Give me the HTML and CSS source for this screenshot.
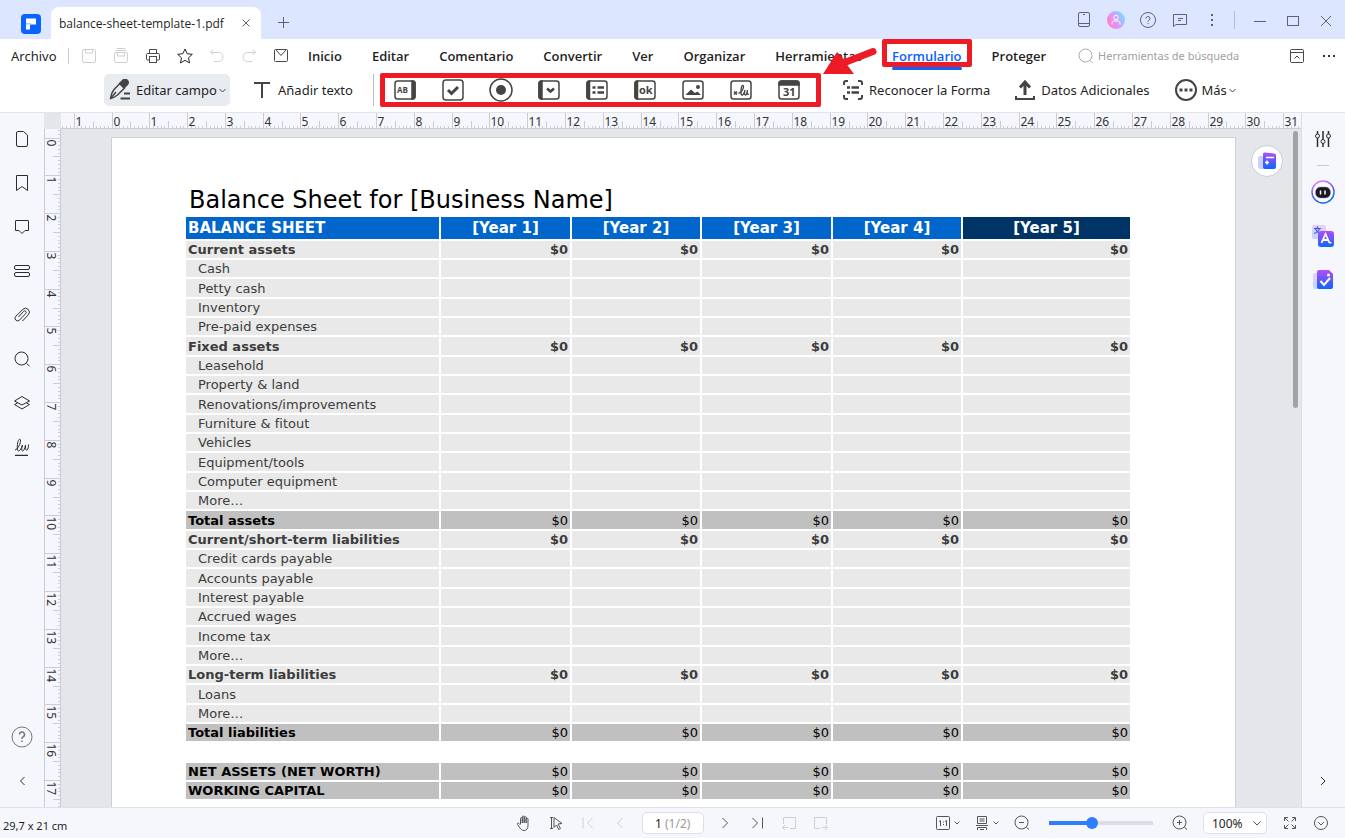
FILE: index.html
```html
<!DOCTYPE html>
<html lang="es">
<head>
  <meta charset="UTF-8">
  <title>balance-sheet-template-1.pdf</title>
  <link rel="stylesheet" href="styles.css">
</head>
<body>
  <svg class="defs" width="0" height="0">
    <defs>
      <linearGradient id="violet" x1="0" y1="0" x2="0" y2="1">
        <stop offset="0" stop-color="#b84cf5"/>
        <stop offset="1" stop-color="#0a66ff"/>
      </linearGradient>
      <linearGradient id="pale" x1="0" y1="0" x2="0" y2="1">
        <stop offset="0" stop-color="#e6d0fa"/>
        <stop offset="1" stop-color="#c2d4ff"/>
      </linearGradient>
      <linearGradient id="ring" x1="0" y1="0" x2="0.4" y2="1">
        <stop offset="0" stop-color="#f78bf5"/>
        <stop offset="0.5" stop-color="#7a5cf5"/>
        <stop offset="1" stop-color="#0a66ff"/>
      </linearGradient>
      <linearGradient id="avatar" x1="0.1" y1="0.8" x2="1" y2="0.3">
        <stop offset="0" stop-color="#ff7fd0"/>
        <stop offset="0.5" stop-color="#d59bff"/>
        <stop offset="1" stop-color="#6fe3ff"/>
      </linearGradient>
    </defs>
  </svg>

  <header class="titlebar">
    <svg class="logo" width="20" height="20" viewBox="0 0 20 20"><rect width="20" height="20" rx="4" fill="#0a62ff"/><path d="M5 4.5h10v6h-6v5H5z" fill="#fff"/><path d="M5 9h5v1.5H5z" fill="#a9c8ff"/></svg>
    <div class="tab">
      <span>balance-sheet-template-1.pdf</span>
      <button class="icon-btn" aria-label="Cerrar pestaña"><svg width="8" height="8" viewBox="0 0 8 8"><path d="M.5.5l7 7M7.5.5l-7 7"/></svg></button>
    </div>
    <button class="icon-btn new-tab" aria-label="Nueva pestaña"><svg width="11" height="11" viewBox="0 0 11 11"><path d="M5.5 0v11M0 5.5h11"/></svg></button>
    <div class="window-tools">
      <button class="icon-btn" aria-label="Móvil"><svg width="16" height="16" viewBox="0 0 16 16"><rect x="2.5" y=".5" width="11" height="14" rx="1.5"/><path d="M7 2.5h2M2.5 11.500h11"/></svg></button>
      <button class="icon-btn" aria-label="Cuenta"><svg width="18" height="18" viewBox="0 0 18 18"><circle cx="9" cy="9" r="9" fill="url(#avatar)" stroke="none"/><circle cx="9" cy="6.5" r="2.2" stroke="#fff"/><path d="M5 13.500v-1.500c0-1.200 1-2 2-2h4c1 0 2 .8 2 2v1.500" stroke="#fff"/></svg></button>
      <button class="icon-btn" aria-label="Ayuda"><svg width="16" height="16" viewBox="0 0 16 16"><circle cx="8" cy="8" r="7.5"/><path d="M6 6.500a2 2 0 1 1 2.800 1.800c-.6.3-.8.6-.8 1.400M8 11v1.200"/></svg></button>
      <button class="icon-btn" aria-label="Comentarios"><svg width="16" height="16" viewBox="0 0 16 16"><path d="M1.500 2.500h13v10H4l-2.500 2z"/><path d="M6 6.500h5M6 8.500h3"/></svg></button>
      <button class="icon-btn" aria-label="Opciones"><svg width="16" height="16" viewBox="0 0 16 16"><path d="M7 2h2v2H7zM7 7h2v2H7zM7 12h2v2H7z" fill="#5d6275" stroke="none"/></svg></button>
    </div>
    <div class="window-buttons">
      <button class="icon-btn" aria-label="Minimizar"><svg width="12" height="12" viewBox="0 0 12 12"><path d="M0 6.500h12"/></svg></button>
      <button class="icon-btn" aria-label="Maximizar"><svg width="12" height="12" viewBox="0 0 12 12"><rect x=".5" y="1.500" width="11" height="9"/></svg></button>
      <button class="icon-btn" aria-label="Cerrar"><svg width="12" height="12" viewBox="0 0 12 12"><path d="M1 1l10 10M11 1L1 11"/></svg></button>
    </div>
  </header>

  <nav class="menubar">
    <button class="file-menu">Archivo</button>
    <div class="quick">
      <button class="icon-btn off" aria-label="Guardar"><svg width="16" height="16" viewBox="0 0 16 16"><rect x="1.500" y="1.500" width="13" height="13" rx="1.500"/><path d="M4.500 1.500v3.500h7V1.500"/></svg></button>
      <button class="icon-btn off" aria-label="Guardar todo"><svg width="16" height="16" viewBox="0 0 16 16"><path d="M3.500.5h9M2.500 2.500h11"/><rect x="1.500" y="4.500" width="13" height="10" rx="1.500"/><path d="M4.500 4.500V8h7V4.500"/></svg></button>
      <button class="icon-btn" aria-label="Imprimir"><svg width="16" height="16" viewBox="0 0 16 16"><path d="M4.500 5V1.500h7V5M4.500 12h-2a1 1 0 0 1-1-1V6.500a1 1 0 0 1 1-1h11a1 1 0 0 1 1 1V11a1 1 0 0 1-1 1h-2"/><rect x="4.500" y="8.500" width="7" height="6"/></svg></button>
      <button class="icon-btn" aria-label="Favorito"><svg width="16" height="16" viewBox="0 0 16 16"><path d="M8 1l2.200 4.700 5.100.6-3.800 3.500 1 5.100L8 12.400l-4.500 2.500 1-5.100L.7 6.300l5.100-.6z" stroke="#222"/></svg></button>
      <button class="icon-btn off" aria-label="Deshacer"><svg width="16" height="16" viewBox="0 0 16 16"><path d="M4.500 1l-3 3 3 3M1.500 4.500h8a4.500 4.500 0 0 1 0 9H5"/></svg></button>
      <button class="icon-btn off" aria-label="Rehacer"><svg width="16" height="16" viewBox="0 0 16 16"><path d="M11.500 1l3 3-3 3M14.500 4.500h-8a4.500 4.500 0 0 0 0 9H11"/></svg></button>
      <button class="icon-btn" aria-label="Correo"><svg width="16" height="16" viewBox="0 0 16 16"><rect x="1.500" y="1.500" width="13" height="12" rx="1"/><path d="M3 2l5 5.500L13 2"/></svg></button>
    </div>
    <div class="menus">
      <button>Inicio</button>
      <button>Editar</button>
      <button>Comentario</button>
      <button>Convertir</button>
      <button>Ver</button>
      <button>Organizar</button>
      <button>Herramientas</button>
      <button class="active">Formulario</button>
      <button>Proteger</button>
    </div>
    <label class="search">
      <svg width="16" height="16" viewBox="0 0 16 16"><circle cx="7.500" cy="7.500" r="6.500"/><path d="M12 12.500l2.500 2.500"/></svg>
      <input type="text" placeholder="Herramientas de búsqueda" aria-label="Herramientas de búsqueda">
    </label>
    <div class="menu-end">
      <button class="icon-btn" aria-label="Contraer"><svg width="16" height="16" viewBox="0 0 16 16"><rect x="1.500" y="1.500" width="13" height="13" rx="1"/><path d="M1.500 4.500h13M5.500 10.500L8 8l2.500 2.500"/></svg></button>
      <button class="icon-btn" aria-label="Más opciones"><svg width="16" height="16" viewBox="0 0 16 16"><path d="M2 7h2v2H2zM7 7h2v2H7zM12 7h2v2h-2z" fill="#333" stroke="none"/></svg></button>
    </div>
  </nav>

  <div class="toolbar">
    <button class="tool selected">
      <svg width="22" height="22" viewBox="0 0 22 22"><path d="M1.500 19.500c.5-4 1.500-6.500 3.500-9L11 4.500l4.500 4.500-7 7c-2 1.500-4 3-7 3.500zM1.500 19.500L7 13" stroke-width="1.500"/><path d="M11 4.500l3-3a2.600 2.600 0 0 1 4 4l-3 3z" fill="#444"/><path d="M15 14.500h6M11.500 19.500H21"/></svg>
      <span>Editar campo</span>
      <svg class="chev" width="7" height="5" viewBox="0 0 7 5"><path d="M.5 1l3 3 3-3"/></svg>
    </button>
    <button class="tool add-text">
      <svg width="16" height="16" viewBox="0 0 16 16"><path d="M0 1h16M8 1v15"/></svg>
      <span>Añadir texto</span>
    </button>
    <div class="fields">
      <button class="icon-btn" aria-label="Campo de texto"><svg width="24" height="24" viewBox="0 0 24 24"><rect x="2" y="3" width="20" height="18" rx="2.500"/><path d="M19 3h.5A2.500 2.500 0 0 1 22 5.500v13a2.500 2.500 0 0 1-2.500 2.500H19z" fill="#444"/><text x="4" y="15" font-size="8">AB</text></svg></button>
      <button class="icon-btn" aria-label="Casilla"><svg width="24" height="24" viewBox="0 0 24 24"><rect x="2" y="2" width="20" height="20" rx="3"/><path d="M7 12l3.500 3.500L17 9" stroke-width="3"/></svg></button>
      <button class="icon-btn" aria-label="Botón de opción"><svg width="24" height="24" viewBox="0 0 24 24"><circle cx="12" cy="12" r="11"/><circle cx="12" cy="12" r="5" fill="#444" stroke="none"/></svg></button>
      <button class="icon-btn" aria-label="Lista desplegable"><svg width="24" height="24" viewBox="0 0 24 24"><rect x="2" y="3" width="20" height="18" rx="2.500"/><path d="M5 3h-.5A2.500 2.500 0 0 0 2 5.500v13A2.500 2.500 0 0 0 4.500 21H5z" fill="#444"/><path d="M10 10.500l3.500 3 3.500-3" stroke-width="2.500"/></svg></button>
      <button class="icon-btn" aria-label="Cuadro de lista"><svg width="24" height="24" viewBox="0 0 24 24"><rect x="2" y="3" width="20" height="18" rx="2.500"/><path d="M4.500 3A2.500 2.500 0 0 0 2 5.500v13A2.500 2.500 0 0 0 4.500 21z" fill="#444"/><path d="M7.500 9.500h3M7.500 14.500h3M12.500 9.500H19M12.500 14.500H19" stroke-width="2.500"/></svg></button>
      <button class="icon-btn" aria-label="Botón"><svg width="24" height="24" viewBox="0 0 24 24"><rect x="2" y="3" width="20" height="18" rx="2.500"/><path d="M4.500 3A2.500 2.500 0 0 0 2 5.500v13A2.500 2.500 0 0 0 4.500 21z" fill="#444"/><text x="6" y="16" font-size="11">ok</text></svg></button>
      <button class="icon-btn" aria-label="Imagen"><svg width="24" height="24" viewBox="0 0 24 24"><rect x="2" y="3" width="20" height="18" rx="2.500"/><path d="M4.500 17l5.500-5.500L14 15l2.500-1.500L20 17z" fill="#444" stroke="none"/><circle cx="17" cy="9" r="2" fill="#444" stroke="none"/></svg></button>
      <button class="icon-btn" aria-label="Firma"><svg width="24" height="24" viewBox="0 0 24 24"><rect x="2" y="3" width="20" height="18" rx="2.500"/><path d="M5 13.500l3 3M8 13.500l-3 3"/><path d="M9.500 15.500c3-1.500 5.500-5 5-7.500-.5-1-1.500-.5-2 1-.8 3-.8 8 .5 8s2.500-3 3-5c-.5 2-1 5 .5 5s1.500-3 2-5c-.5 2-.5 5.500 1.500 4" stroke-width="1.300"/></svg></button>
      <button class="icon-btn" aria-label="Fecha"><svg width="24" height="24" viewBox="0 0 24 24"><rect x="2" y="3" width="20" height="18" rx="2.500"/><path d="M4.500 3h15A2.500 2.500 0 0 1 22 5.500V7H2V5.500A2.500 2.500 0 0 1 4.500 3z" fill="#444"/><text x="6" y="18" font-size="11">31</text></svg></button>
      <svg class="arrow" width="60" height="32" viewBox="0 0 60 32"><path d="M26 16L53 5.500" stroke="#ed1c24" stroke-width="7" stroke-linecap="round"/><path d="M3 28L17 6l6 6 5 8 6 8z" fill="#ed1c24" stroke="none"/></svg>
    </div>
    <button class="tool recognize">
      <svg width="20" height="20" viewBox="0 0 20 20"><path d="M1 5V3a2 2 0 0 1 2-2h2M15 1h2a2 2 0 0 1 2 2v2M19 15v2a2 2 0 0 1-2 2h-2M5 19H3a2 2 0 0 1-2-2v-2"/><path d="M4 7.500h3M8.500 7.500H16M4 12.500h3M8.500 12.500H16" stroke-width="2.500"/></svg>
      <span>Reconocer la Forma</span>
    </button>
    <button class="tool extra">
      <svg width="20" height="20" viewBox="0 0 20 20"><path d="M1 16v3h18v-3"/><path d="M10 15V4M5 7.500L10 2l5 5.500" stroke-width="3"/></svg>
      <span>Datos Adicionales</span>
    </button>
    <button class="tool more">
      <svg width="22" height="22" viewBox="0 0 22 22"><circle cx="11" cy="11" r="10"/><path d="M4.500 9.500h3v3h-3zM9.500 9.500h3v3h-3zM14.500 9.500h3v3h-3z" fill="#444" stroke="none"/></svg>
      <span>Más</span>
      <svg class="chev" width="7" height="5" viewBox="0 0 7 5"><path d="M.5 1l3 3 3-3"/></svg>
    </button>
  </div>

  <main class="workspace">
    <aside class="side left">
      <button class="icon-btn" aria-label="Miniaturas"><svg width="16" height="16" viewBox="0 0 16 16"><path d="M4 .5h5.500l4 3.500v10a1.500 1.500 0 0 1-1.500 1.500H4A1.500 1.500 0 0 1 2.500 14V2A1.500 1.500 0 0 1 4 .5z"/></svg></button>
      <button class="icon-btn" aria-label="Marcadores"><svg width="16" height="16" viewBox="0 0 16 16"><path d="M2.500.5h11v15L8 11.500l-5.500 4z"/></svg></button>
      <button class="icon-btn" aria-label="Comentarios"><svg width="16" height="16" viewBox="0 0 16 16"><path d="M2 1.500h12a.5.5 0 0 1 .5.5v9.500H11l-3 3-3-3H1.500V2a.5.5 0 0 1 .5-.5z"/></svg></button>
      <button class="icon-btn" aria-label="Campos"><svg width="16" height="16" viewBox="0 0 16 16"><rect x=".5" y="2.500" width="15" height="4" rx="1.500"/><rect x=".5" y="9.500" width="15" height="4" rx="1.500"/></svg></button>
      <button class="icon-btn" aria-label="Adjuntos"><svg width="16" height="16" viewBox="0 0 16 16"><path d="M8.500 14l5.800-6.200a3.800 3.800 0 0 0-5.500-5.300L1.800 9.300a2.600 2.600 0 0 0 3.700 3.800l6.300-6.600a1.500 1.500 0 0 0-2.200-2.100L4.500 10"/></svg></button>
      <button class="icon-btn" aria-label="Buscar"><svg width="16" height="16" viewBox="0 0 16 16"><circle cx="7.500" cy="7.500" r="6.500"/><path d="M12.500 12.500l3 2.500"/></svg></button>
      <button class="icon-btn" aria-label="Capas"><svg width="16" height="16" viewBox="0 0 16 16"><path d="M8 1.500L15.500 6 8 10 .5 6zM3.500 8L.5 9.500 8 14l7.500-4.500-3-1.500"/></svg></button>
      <button class="icon-btn" aria-label="Firmas"><svg width="16" height="18" viewBox="0 0 16 18"><path d="M1 12c3-1 6-7 5.500-10-.5-1.500-2-.5-2.500 1.500-1 4-1 9.500.5 9.500s3-3 4-6c-.5 2-1.500 6 0 6s2.500-3 3-6c-.2 3 .3 6 1.500 5s1.500-3 1.500-5.500"/><path d="M1 17.500h13" stroke-width="1.500"/></svg></button>
      <button class="icon-btn help" aria-label="Ayuda"><svg width="22" height="22" viewBox="0 0 22 22"><circle cx="11" cy="11" r="10" stroke="#777"/><path d="M8.500 8.500a2.500 2.500 0 1 1 3.500 2.300c-.7.4-1 .8-1 1.700v.5M11 14.500V16" stroke="#777" stroke-width="1.500"/></svg></button>
      <button class="icon-btn" aria-label="Contraer panel"><svg width="16" height="16" viewBox="0 0 16 16"><path d="M10.500 4L6.500 8l4 4"/></svg></button>
    </aside>

    <section class="canvas">
      <div class="corner"></div>
      <svg class="ruler-h" id="rulerH"></svg>
      <svg class="ruler-v" id="rulerV"></svg>
      <div class="view">
        <article class="paper">
          <h1>Balance Sheet for [Business Name]</h1>
          <table>
            <colgroup><col class="c-name"><col class="c-odd"><col><col class="c-odd"><col><col class="c-last"></colgroup>
            <thead>
              <tr><th>BALANCE SHEET</th><th>[Year 1]</th><th>[Year 2]</th><th>[Year 3]</th><th>[Year 4]</th><th class="dark">[Year 5]</th></tr>
            </thead>
            <tbody id="rows"></tbody>
          </table>
        </article>
        <button class="float" aria-label="Asistente"><svg width="20" height="20" viewBox="0 0 20 20"><rect x="1" y="5" width="9" height="13" rx="2" fill="#c9d2ff"/><path d="M7.500 1.500L17 2.500a2 2 0 0 1 2 2V16a2 2 0 0 1-2 2H8a2 2 0 0 1-2-2V3a1.500 1.500 0 0 1 1.500-1.500z" fill="url(#violet)"/><path d="M9 6.500h8M10 9.500v4M8 11.500h4" stroke="#fff" stroke-width="1.500"/></svg></button>
        <div class="scroll-thumb"></div>
      </div>
    </section>

    <aside class="side right">
      <button class="icon-btn" aria-label="Propiedades"><svg width="16" height="16" viewBox="0 0 16 16"><path d="M2.500 0v3M2.500 7v9M8 0v8.500M8 12.500V16M13.500 0v3M13.500 7v9" stroke-width="1.500"/><circle cx="2.500" cy="5" r="2"/><circle cx="8" cy="10.500" r="2"/><circle cx="13.500" cy="5" r="2"/></svg></button>
      <hr>
      <button class="icon-btn" aria-label="IA"><svg width="24" height="24" viewBox="0 0 24 24"><circle cx="12" cy="12" r="11" fill="#fff" stroke="url(#ring)" stroke-width="1.500"/><rect x="4.500" y="7" width="15" height="11" rx="5" fill="#1a1a1e" stroke="#9a6cf5" stroke-width=".5"/><path d="M9.500 10.500v4M14 10.500v4" stroke="#fff" stroke-width="1.500"/></svg></button>
      <button class="icon-btn" aria-label="Traducir"><svg width="24" height="24" viewBox="0 0 24 24"><rect x="1" y="1" width="14" height="14" rx="2" fill="url(#pale)" stroke="none"/><path d="M3 4.500h7M6.500 2.500v2M8.500 4.500C8 7 6 8.500 3 9.500M4.500 5c1 2 2 3.500 4 4" stroke="#2e5bf5" stroke-width="1.200"/><rect x="7" y="7" width="16" height="16" rx="3" fill="url(#violet)" stroke="none"/><path d="M10.500 19l4-9 4 9M12 16h5M19.500 18v1.500" stroke="#fff" stroke-width="1.800"/></svg></button>
      <button class="icon-btn" aria-label="Revisar"><svg width="24" height="24" viewBox="0 0 24 24"><rect x="2" y="5" width="10" height="16" rx="2" fill="url(#pale)" stroke="none"/><path d="M8 2h10l4 4v13a2 2 0 0 1-2 2H8a2 2 0 0 1-2-2V4a2 2 0 0 1 2-2z" fill="url(#violet)" stroke="none"/><path d="M9.500 13l3.500 4 6-7" stroke="#fff" stroke-width="2"/><circle cx="17.500" cy="7" r="1.500" fill="#fff" stroke="none"/></svg></button>
      <button class="icon-btn next" aria-label="Contraer panel"><svg width="16" height="16" viewBox="0 0 16 16"><path d="M6 4l4 4-4 4"/></svg></button>
    </aside>
  </main>

  <footer class="statusbar">
    <span class="page-size">29,7 x 21 cm</span>
    <div class="paging">
      <button class="icon-btn" aria-label="Mano"><svg width="16" height="16" viewBox="0 0 16 16"><path d="M4.500 9V3.500c0-1.300 1.800-1.300 1.800 0V8 2c0-1.300 1.900-1.300 1.900 0v6-5.500c0-1.300 1.900-1.300 1.900 0V8 4c0-1.200 1.900-1.200 1.900 0v6.500c0 3-1.500 5-4 5-2 0-3-1-4-2.500L1.500 9.500c-.8-1.300.8-2 1.500-1l1.500 1.500"/></svg></button>
      <button class="icon-btn" aria-label="Seleccionar"><svg width="16" height="16" viewBox="0 0 16 16"><path d="M2 2.500h3M2 13.500h3M3.500 2.500v11M6 2.500l8 6-4 .5 2.500 4.500-1.800 1L8.500 10 6 12.500z"/></svg></button>
      <button class="icon-btn off" aria-label="Primera página"><svg width="16" height="16" viewBox="0 0 16 16"><path d="M3 2.500v11M12.500 3L7.500 8l5 5"/></svg></button>
      <button class="icon-btn off" aria-label="Página anterior"><svg width="16" height="16" viewBox="0 0 16 16"><path d="M10.500 3L5.500 8l5 5"/></svg></button>
      <label class="page-box"><input type="text" value="1" aria-label="Página"><span>(1/2)</span></label>
      <button class="icon-btn" aria-label="Página siguiente"><svg width="16" height="16" viewBox="0 0 16 16"><path d="M5.500 3l5 5-5 5"/></svg></button>
      <button class="icon-btn" aria-label="Última página"><svg width="16" height="16" viewBox="0 0 16 16"><path d="M3.500 3l5 5-5 5M13.500 2.500v11"/></svg></button>
      <button class="icon-btn off" aria-label="Vista anterior"><svg width="16" height="16" viewBox="0 0 16 16"><path d="M2.500 9V2.500h12v11H9M7 12.500H1.500M4 10l-2.500 2.500L4 15"/></svg></button>
      <button class="icon-btn off" aria-label="Vista siguiente"><svg width="16" height="16" viewBox="0 0 16 16"><path d="M13.500 9V2.500h-12v11H7M9 12.500h5.500M12 10l2.500 2.500L12 15"/></svg></button>
    </div>
    <div class="zoom">
      <button class="icon-btn" aria-label="Tamaño real"><svg width="24" height="16" viewBox="0 0 24 16"><rect x=".5" y="1.500" width="13" height="13" rx="1"/><path d="M3 6.500l1.500-1V11M9 6.500l1.500-1V11M7.500 6.500v1M7.500 9v1M18.500 6.500L21 9l2.500-2.500"/></svg></button>
      <button class="icon-btn" aria-label="Vista de página"><svg width="24" height="16" viewBox="0 0 24 16"><path d="M2.500 1.500h9v7h-9zM4.500 4h5M4.500 6h5M1 10.500h12M2.500 15v-2.500h9V15M5 14.500h4M18.500 6.500L21 9l2.500-2.500"/></svg></button>
      <button class="icon-btn" aria-label="Alejar"><svg width="16" height="16" viewBox="0 0 16 16"><circle cx="7.500" cy="7.500" r="6.500"/><path d="M5 7.500h5M12.500 12.500l2.500 2"/></svg></button>
      <input type="range" min="0" max="100" value="40" aria-label="Zoom">
      <button class="icon-btn" aria-label="Acercar"><svg width="16" height="16" viewBox="0 0 16 16"><circle cx="7.500" cy="7.500" r="6.500"/><path d="M5 7.500h5M7.500 5v5M12.500 12.500l2.500 2"/></svg></button>
      <div class="zoom-select">
        <select aria-label="Nivel de zoom"><option>100%</option><option>150%</option></select>
        <svg width="8" height="5" viewBox="0 0 8 5"><path d="M.5.5L4 4 7.500.5"/></svg>
      </div>
      <button class="icon-btn" aria-label="Pantalla completa"><svg width="16" height="16" viewBox="0 0 16 16"><path d="M2.500 6V2.500H6M10 2.500h3.500V6M13.500 10v3.500H10M6 13.500H2.500V10M3 3l3.500 3.500M13 3L9.500 6.500M13 13L9.500 9.500M3 13l3.500-3.500"/></svg></button>
      <button class="icon-btn" aria-label="Más"><svg width="16" height="16" viewBox="0 0 16 16"><circle cx="8" cy="8" r="6.500"/><path d="M5 7l3 3 3-3"/></svg></button>
    </div>
  </footer>

  <script src="script.js"></script>
</body>
</html>
```

FILE: styles.css
```css
* {
  box-sizing: border-box;
}

body {
  margin: 0;
  height: 100vh;
  display: flex;
  flex-direction: column;
  overflow: hidden;
  font-family: "Noto Sans", "Open Sans", sans-serif;
  font-size: 13px;
  color: #1f1f1f;
  background: #fff;
}

.defs {
  position: absolute;
}

button,
input,
select {
  font: inherit;
  color: inherit;
  border: none;
  padding: 0;
  background: none;
}

svg {
  fill: none;
  stroke: #4a4a4a;
  display: block;
  flex: none;
}

.icon-btn {
  display: flex;
  align-items: center;
  justify-content: center;
  flex: none;
}

.off svg {
  stroke: #cfcfd3;
}

/* title bar */
.titlebar {
  height: 39px;
  flex: none;
  display: flex;
  align-items: center;
  background: #dde6ff;
}

.titlebar svg {
  stroke: #5d6275;
}

.titlebar .logo {
  margin: 8px 10px 0 21px;
  stroke: none;
}

.tab {
  width: 210px;
  height: 32px;
  align-self: flex-end;
  display: flex;
  align-items: center;
  justify-content: space-between;
  padding: 0 11px 0 8px;
  background: #fff;
  border-radius: 8px 8px 0 0;
  font-family: "Open Sans", sans-serif;
  font-size: 12px;
}

.new-tab {
  margin: 6px 0 0 17px;
}

.window-tools {
  margin-left: auto;
  display: flex;
  align-items: center;
  gap: 16px;
  padding-right: 14px;
  border-right: 1px solid #b5bcd0;
}

.window-tools .icon-btn {
  width: 16px;
}

.window-buttons {
  display: flex;
  gap: 21px;
  padding: 2px 13px 0 19px;
}

/* menu */
.menubar {
  height: 35px;
  flex: none;
  display: flex;
  align-items: center;
  padding: 0 8px 2px 0;
}

.file-menu {
  width: 69px;
  height: 16px;
  line-height: 16px;
  padding-left: 11px;
  text-align: left;
  border-right: 1px solid #ccc;
}

.quick {
  display: flex;
  gap: 16px;
  margin: 0 19px 0 12px;
}

.menus {
  display: flex;
  gap: 30px;
}

.menus button {
  font-family: "Open Sans", sans-serif;
  font-weight: 600;
  height: 20px;
  line-height: 20px;
}

.menus .active {
  position: relative;
  color: #0a62ff;
}

.menus .active::before {
  content: "";
  position: absolute;
  left: 0;
  right: 0;
  bottom: -4px;
  height: 3px;
  border-radius: 2px;
  background: #0a62ff;
}

.menus .active::after {
  content: "";
  position: absolute;
  inset: -7px -10px -1px;
  border: 5px solid #ed1c24;
  border-radius: 2px;
}

.search {
  flex: 1;
  display: flex;
  align-items: center;
  gap: 4px;
  margin-left: 32px;
}

.search svg {
  stroke: #aaa;
}

.search input {
  flex: 1;
  min-width: 0;
  font-size: 11px;
}

.search input::placeholder {
  color: #a0a0a0;
}

.menu-end {
  display: flex;
  gap: 16px;
}

/* tools */
.toolbar {
  height: 39px;
  flex: none;
  display: flex;
  align-items: flex-start;
  padding-left: 104px;
  border-bottom: 1px solid #e4e4e8;
}

.toolbar svg {
  stroke-width: 2;
  stroke: #444;
}

.toolbar text {
  fill: #444;
  stroke: none;
  font-family: "Open Sans", sans-serif;
  font-weight: 700;
}

.toolbar .chev {
  stroke-width: 1;
}

.tool {
  height: 32px;
  display: flex;
  align-items: center;
  white-space: nowrap;
  gap: 6px;
}

.tool .chev {
  margin-left: -3px;
}

.selected {
  width: 126px;
  padding-left: 5px;
  gap: 5px;
  border-radius: 5px;
  background: #e8ebf0;
}

.add-text {
  width: 119px;
  margin-left: 24px;
  gap: 8px;
}

.fields {
  position: relative;
  display: flex;
  gap: 24px;
  padding: 4px 21px 4px 19px;
  border-left: 1px solid #b8bccb;
}

.fields .icon-btn svg {
  stroke-width: 1.5px;
}

.fields::after {
  content: "";
  position: absolute;
  inset: -1px 1px -1px 6px;
  border: 5px solid #ed1c24;
  border-radius: 2px;
}

.arrow {
  position: absolute;
  left: 446px;
  top: -28px;
  z-index: 1;
}

.recognize {
  margin-left: 21px;
}

.extra {
  margin-left: 25px;
}

.more {
  margin-left: 25px;
  gap: 5px;
}

/* workspace */
.workspace {
  flex: 1;
  min-height: 0;
  display: flex;
}

.side {
  width: 44px;
  flex: none;
  display: flex;
  flex-direction: column;
  align-items: center;
  background: #f6f7fc;
}

.side svg {
  stroke: #2c2c2c;
}

.left {
  gap: 28px;
  padding: 18px 0;
}

.left .icon-btn {
  height: 16px;
}

.left .help {
  margin-top: auto;
}

.right {
  gap: 20px;
  padding: 18px 2px 18px 0;
  border-left: 1px solid #dcdee6;
}

.right hr {
  width: 12px;
  margin: -2px 0 -6px;
  border: none;
  border-top: 1px solid #c8cad4;
}

.right .next {
  margin-top: auto;
}

.canvas {
  flex: 1;
  min-width: 0;
  display: grid;
  grid-template-columns: 17px 1fr;
  grid-template-rows: 16px 1fr;
}

.corner {
  background: #e5e6ea;
}

.ruler-h,
.ruler-v {
  width: 100%;
  height: 100%;
  min-height: 0;
  background: #f6f7fc;
  stroke: #c9ccd9;
}

.ruler-h text,
.ruler-v text {
  fill: #333;
  stroke: none;
  font-size: 12px;
}

.view {
  position: relative;
  min-height: 0;
  overflow: hidden;
  padding: 8px 65px 0 50px;
  background: #e5e6ea;
}

.paper {
  height: 100%;
  overflow: hidden;
  padding: 46px 105px 0 74px;
  background: #fff;
  border: 1px solid #cdd0da;
  border-bottom: none;
  font-family: "DejaVu Sans", sans-serif;
}

.paper h1 {
  margin: 0;
  padding-left: 3px;
  height: 33px;
  line-height: 32px;
  font-size: 24px;
  font-weight: 400;
  color: #000;
}

.paper table {
  width: 100%;
  table-layout: fixed;
  border-spacing: 0;
}

.c-name {
  width: 255px;
}

col {
  width: 130px;
}

.c-odd {
  width: 131px;
}

.c-last {
  width: auto;
}

.paper th {
  height: 24px;
  line-height: 20px;
  padding: 0 2px;
  font-size: 15px;
  color: #fff;
  background: #0066cc;
  border: solid #fff;
  border-width: 0 2px 2px 0;
}

.paper th:first-child {
  text-align: left;
}

.paper .dark {
  background: #003366;
}

.paper td {
  height: 19px;
  line-height: 17px;
  padding: 0 2px;
  font-size: 13px;
  text-align: right;
  color: #3c3c3c;
  background: #e9e9e9;
  border: solid #fff;
  border-width: 0 2px 2px 0;
}

.paper th:last-child,
.paper td:last-child {
  border-right-width: 0;
}

.paper tr:nth-child(3n) td {
  height: 20px;
}

.paper td:first-child {
  padding-left: 12px;
  text-align: left;
}

.paper .group td {
  font-weight: 700;
}

.paper .group td:first-child,
.paper .total td:first-child {
  padding-left: 2px;
  font-weight: 700;
}

.paper .total td {
  color: #000;
  background: #c0c0c0;
}

.paper .blank td {
  background: #fff;
}

.float {
  position: absolute;
  right: 18px;
  top: 16px;
  width: 32px;
  height: 32px;
  display: flex;
  align-items: center;
  justify-content: center;
  border: 1px solid #c9cbdc;
  border-radius: 50%;
  background: #fff;
}

.float svg {
  stroke: none;
}

.scroll-thumb {
  position: absolute;
  right: 3px;
  top: 2px;
  width: 5px;
  height: 277px;
  border-radius: 3px;
  background: #a3a3a5;
}

/* status bar */
.statusbar {
  height: 31px;
  flex: none;
  display: flex;
  align-items: center;
  padding: 0 16px 0 3px;
  background: #f6f7fc;
  border-top: 1px solid #dfe1e8;
  font-size: 12px;
}

.statusbar svg {
  stroke: #555;
}

.statusbar .off svg {
  stroke: #cfcfd3;
}

.page-size {
  width: 513px;
  padding-top: 5px;
  font-size: 11px;
}

.paging {
  display: flex;
  align-items: center;
  gap: 16px;
}

.zoom {
  display: flex;
  align-items: center;
  gap: 15px;
  margin-left: auto;
}

.page-box {
  width: 62px;
  height: 22px;
  display: flex;
  align-items: center;
  gap: 3px;
  margin: 0 -3px 0 -2px;
  padding-left: 12px;
  border: 1px solid #dedfe6;
  border-radius: 5px;
  background: #fff;
  color: #999;
}

.page-box input {
  width: 7px;
  color: #222;
}

.zoom input {
  width: 104px;
  height: 12px;
  margin: 0 4px;
  appearance: none;
  background: linear-gradient(#2f7dff, #2f7dff) left / 40% 4px no-repeat, linear-gradient(#dcdde9, #dcdde9) center / 100% 4px no-repeat;
}

.zoom input::-webkit-slider-thumb {
  appearance: none;
  width: 12px;
  height: 12px;
  border-radius: 50%;
  background: #2f7dff;
}

.zoom-select {
  position: relative;
}

.zoom-select select {
  width: 64px;
  height: 22px;
  padding-left: 8px;
  appearance: none;
  border: 1px solid #dedfe6;
  border-radius: 5px;
  background: #fff;
}

.zoom-select svg {
  position: absolute;
  right: 6px;
  top: 9px;
}
```

FILE: script.js
```js
const rows = document.getElementById("rows");

const lines = [
  ["group", "Current assets"],
  ["", "Cash"],
  ["", "Petty cash"],
  ["", "Inventory"],
  ["", "Pre-paid expenses"],
  ["group", "Fixed assets"],
  ["", "Leasehold"],
  ["", "Property & land"],
  ["", "Renovations/improvements"],
  ["", "Furniture & fitout"],
  ["", "Vehicles"],
  ["", "Equipment/tools"],
  ["", "Computer equipment"],
  ["", "More…"],
  ["total", "Total assets"],
  ["group", "Current/short-term liabilities"],
  ["", "Credit cards payable"],
  ["", "Accounts payable"],
  ["", "Interest payable"],
  ["", "Accrued wages"],
  ["", "Income tax"],
  ["", "More…"],
  ["group", "Long-term liabilities"],
  ["", "Loans"],
  ["", "More…"],
  ["total", "Total liabilities"],
  ["blank", ""],
  ["total", "NET ASSETS (NET WORTH)"],
  ["total", "WORKING CAPITAL"]
];

lines.forEach(([kind, name]) => {
  const tr = rows.insertRow();
  tr.className = kind;
  tr.insertCell().textContent = name;
  for (let i = 0; i < 5; i++) {
    tr.insertCell().textContent = kind === "group" || kind === "total" ? "$0" : "";
  }
});

// rulers, in centimetres at 96 dpi
const CM = 96 / 2.54;

function drawRuler(svg, origin, vertical) {
  const length = vertical ? svg.clientHeight : svg.clientWidth;
  const end = vertical ? 17 : 16;
  let d = vertical ? `M16.5 0V${length}M.5 0V${length}` : `M0 15.5H${length}`;
  let labels = "";

  for (let i = -Math.floor(origin / CM * 10); origin + i * CM / 10 < length; i++) {
    const at = Math.floor(origin + i * CM / 10) + 0.5;
    const size = i % 10 === 0 ? end : i % 5 === 0 ? 8 : 3;
    d += vertical ? `M${end - size} ${at}H${end}` : `M${at} ${end - size}V${end}`;
    if (i % 10 === 0) {
      const n = Math.abs(i / 10);
      labels += vertical
        ? `<text transform="translate(3 ${at + 1}) rotate(90)">${n}</text>`
        : `<text x="${at + 1}" y="13">${n}</text>`;
    }
  }
  svg.innerHTML = `<path d="${d}"/>${labels}`;
}

function drawRulers() {
  drawRuler(document.getElementById("rulerH"), 51, false);
  drawRuler(document.getElementById("rulerV"), 9, true);
}

window.addEventListener("resize", drawRulers);
drawRulers();
```
